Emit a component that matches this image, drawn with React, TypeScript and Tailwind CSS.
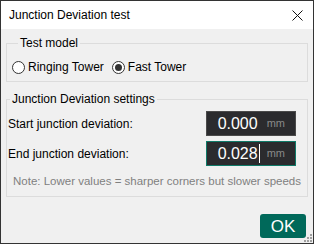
const font = { fontFamily: '"Liberation Sans", Arial, sans-serif' };

function Radio({ label, checked }: { label: string; checked?: boolean }) {
  return (
    <label className="flex items-center gap-[3px]">
      <span className="flex h-[13px] w-[13px] items-center justify-center rounded-full border border-[#333] bg-white">
        {checked ? <span className="h-[7px] w-[7px] rounded-full bg-[#333]" /> : null}
      </span>
      <span>{label}</span>
    </label>
  );
}

function UnitInput({ value, focused }: { value: string; focused?: boolean }) {
  return (
    <div
      className={`flex h-[25px] w-[90px] shrink-0 items-center justify-end bg-[#2b2b2e] pr-[10px] ${
        focused ? "border border-[#0f7a68]" : "border border-[#4a4a4a]"
      }`}
    >
      <span className="relative text-[16px] leading-none text-white">
        {value}
        {focused ? <span className="absolute -right-[2px] top-[-2px] h-[19px] w-px bg-white" /> : null}
      </span>
      <span className="ml-[9px] text-[11px] leading-none text-[#8a8a8a]">mm</span>
    </div>
  );
}

export default function App() {
  return (
    <div
      style={font}
      className="relative flex h-[244px] w-[314px] flex-col border border-[#333] bg-[#f0f0f0] text-[12px] text-black"
    >
      <div className="flex h-[28px] items-center justify-between bg-white pl-[8px] pr-[9px]">
        <span className="text-[12px]">Junction Deviation test</span>
        <svg width="11" height="11" viewBox="0 0 11 11" className="mr-[1px]">
          <path d="M0.5 0.5 L10.5 10.5 M10.5 0.5 L0.5 10.5" stroke="#111" strokeWidth="1" />
        </svg>
      </div>

      <div className="flex flex-1 flex-col px-[5px] pt-[6px]">
        <fieldset className="min-w-0 border border-[#dcdcdc] pb-[6px] pl-[5px] pt-[8px]">
          <legend className="ml-[6px] px-[2px] leading-[16px]">Test model</legend>
          <div className="flex items-center gap-[8px] leading-[16px]">
            <Radio label="Ringing Tower" />
            <Radio label="Fast Tower" checked />
          </div>
        </fieldset>

        <fieldset className="mt-[9px] min-w-0 border border-[#dcdcdc] pb-[7px] pl-[1px] pr-[11px] pt-[4px]">
          <legend className="ml-[2px] px-[2px] leading-[16px]">Junction Deviation settings</legend>
          <div className="flex items-center justify-between">
            <span>Start junction deviation:</span>
            <UnitInput value="0.000" />
          </div>
          <div className="mt-[5px] flex items-center justify-between">
            <span>End junction deviation:</span>
            <UnitInput value="0.028" focused />
          </div>
          <div className="mt-[7px] whitespace-nowrap pl-[5px] text-[11.5px] leading-[16px] text-[#808080]">
            Note: Lower values = sharper corners but slower speeds
          </div>
        </fieldset>

        <div className="mt-auto flex justify-end pb-[5px] pr-[2px]">
          <button className="h-[24px] w-[46px] rounded-[3px] bg-[#00695a] text-[17px] leading-none text-white">
            OK
          </button>
        </div>
      </div>

      <svg width="9" height="9" viewBox="0 0 9 9" className="absolute bottom-0 right-0">
        <g fill="#a0a0a0">
          <rect x="6" y="0" width="2" height="2" />
          <rect x="3" y="3" width="2" height="2" />
          <rect x="6" y="3" width="2" height="2" />
          <rect x="0" y="6" width="2" height="2" />
          <rect x="3" y="6" width="2" height="2" />
          <rect x="6" y="6" width="2" height="2" />
        </g>
      </svg>
    </div>
  );
}
